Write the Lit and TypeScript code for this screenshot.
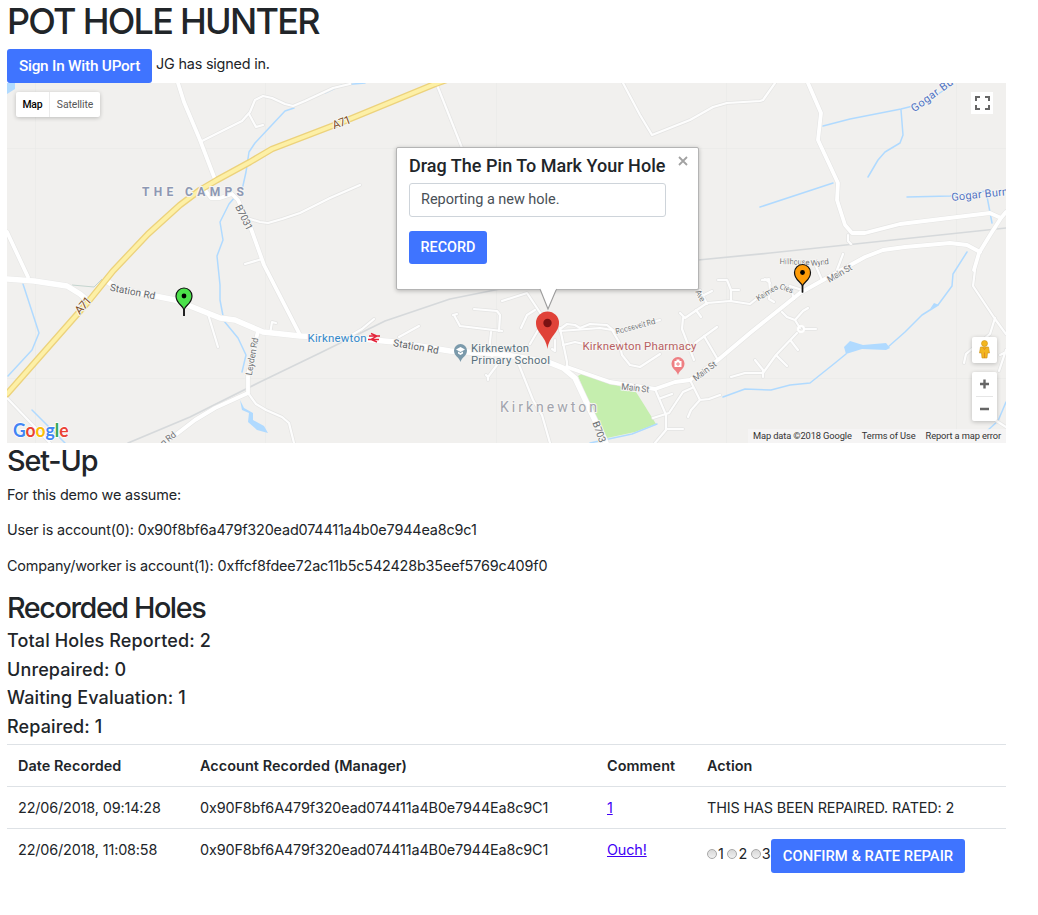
import { LitElement, html, svg, css } from "lit";
import { customElement, property } from "lit/decorators.js";

type Label = { t: string; x: number; y: number; r?: number; s: number; w: number; c: string; b?: number };

const minorRoads = [
  "M202 141L242 121L250 112L255 100L263 96L272 98L285 104L293 106L305 101L333 88L350 84",
  "M249 114L256 127L263 125",
  "M250 219L260 222L268 223L282 219L300 213L330 198L360 185",
  "M245 264L262 259",
  "M208 314L218 347",
  "M294 443L289 423L282 417L266 410L256 404L248 393",
  "M7 398L50 443",
  "M270 334L272 322L276 323",
  "M350 336L362 329L374 319",
  "M399 337L419 326",
  "M453 315L457 314M454 315L460 326L502 331",
  "M474 309L497 311L500 315L499 331",
  "M491 332L489 352L497 365L488 377L486 375M488 376L488 380",
  "M502 301L527 293L545 320",
  "M521 328L527 315L535 310M530 344L541 325",
  "M560 328L567 362L567 368",
  "M560 331L600 328L612 330L619 342L622 355L630 365L640 367L660 354",
  "M560 329L567 324L575 325L580 328L590 324L607 325L614 331",
  "M563 345L575 342L588 345L600 347",
  "M645 324L660 320",
  "M552 349L555 351L555 340",
  "M519 365L533 400L542 415L550 443",
  "M462 148L437 85",
  "M623 83L640 115L652 135L690 120L713 107L727 103L760 101L763 100L775 83",
  "M680 313L685 318L707 303L730 301L750 304L760 296M683 318L682 329L694 360M696 310L701 317M707 304L700 290M704 295L712 291",
  "M718 280L727 280L731 290L731 301M731 290L739 290",
  "M695 343L717 327M704 336L718 360",
  "M655 389L666 415L666 430L655 443M666 429L683 429M661 398L672 394M653 418L669 413L683 392L692 388M691 382L700 400L709 399L720 395M700 400L691 410L688 417",
  "M755 360L763 370L763 377M731 377L745 373L763 373L776 355L797 333M776 355L787 366M791 341L798 350M782 312L787 317L795 320L800 328M795 320L803 311L808 308M804 329L816 329",
  "M762 280L769 279L770 290L769 299L774 302M770 283L765 279M790 286L794 299M802 290L790 286M815 264L822 280M843 254L837 270M848 235L848 241L851 244",
  "M975 270L973 286L995 319L1006 334M995 318L990 334L966 354L964 363M1006 350L999 371M1000 355L1006 352",
  "M995 420L1006 427",
];
const whiteRoads = [
  "M178 83L184 102L200 140L216 182",
  "M205 190L211 198L220 198L232 194L238 200L250 226L264 265L300 335",
  "M7 232L28 277",
  "M258 331L248 374L248 393L215 408L195 420L165 443",
  "M808 83L821 113L818 140L838 183L837 200L845 225L852 233L865 233L900 224L990 213L1001 218L1006 212M1001 218L990 235L979 253L974 270",
  "M567 367L610 382L655 389L675 382L690 380L718 360L750 333L800 293L825 279L865 257L883 250L905 247L950 243L967 245L980 252",
];
const mainRoads = [
  "M7 279L34 281L67 286L80 294L88 301",
  "M107 281L118 289L160 297L175 300L220 318L235 320L263 332L300 336L350 338L395 342L450 351L500 354L548 362L563 368L575 378L590 410L606 443",
];
const streams = [
  "M365 83L342 85L325 93M294 108L285 111L255 143L249 152L246 172L242 190M235 197L229 204L220 222L223 240L217 256L220 285L220 300L224 321L238 338L246 355L242 372",
  "M23 284L39 333L32 350L8 376M32 410L65 443",
  "M823 126L850 119L901 109L925 103L950 86M901 110L903 135L900 143L885 152L878 160L868 177M760 207L833 183M907 197L950 196L986 191L992 223",
  "M967 252L953 274L952 286L938 305L922 315L905 332L888 347M846 354L835 363L810 383L790 385L771 390L745 389L723 397",
  "M590 443L632 434L657 424M1006 402L998 421L988 430",
];
const rail = "M128 443L190 417L260 382L320 353L385 321L450 299L500 289L600 270L698 260L770 253L1006 228";
const a71 = "M460 75L435 84L345 121L272 149L250 162L217 180L200 190L180 205L148 234L113 271L88 302L7 394";

const labels: Label[] = [
  { t: "THE CAMPS", x: 193, y: 196, s: 12, w: 102, c: "#8d98b3", b: 700 },
  { t: "B7031", x: 241, y: 219, r: 64, s: 10, w: 27, c: "#686c71" },
  { t: "A71", x: 343, y: 126, r: -20, s: 11.5, w: 19, c: "#7d4f26" },
  { t: "A71", x: 86, y: 308, r: -48, s: 11.5, w: 19, c: "#7d4f26" },
  { t: "Station Rd", x: 132, y: 295, r: 11, s: 10, w: 46, c: "#5d6368" },
  { t: "Station Rd", x: 415.5, y: 350, r: 10, s: 10, w: 46, c: "#5d6368" },
  { t: "Leyden Rd", x: 255, y: 357, r: -80, s: 9, w: 38, c: "#707377" },
  { t: "n Rd", x: 170, y: 441, r: -38, s: 9, w: 17, c: "#707377" },
  { t: "Kirknewton", x: 337, y: 341.5, s: 11.5, w: 59, c: "#3289cc" },
  { t: "Kirknewton", x: 500, y: 352, s: 11.3, w: 58, c: "#56707d" },
  { t: "Primary School", x: 510.5, y: 364, s: 11.3, w: 79, c: "#56707d" },
  { t: "Kirknewton Pharmacy", x: 639.5, y: 350, s: 11.5, w: 114, c: "#b85f62" },
  { t: "Kirknewton", x: 548.5, y: 412, s: 14, w: 97, c: "#a2a4ad" },
  { t: "Roosevelt Rd", x: 636, y: 329, r: -15, s: 8, w: 41, c: "#74777a" },
  { t: "Main St", x: 635, y: 391, r: 6, s: 9, w: 28, c: "#707377" },
  { t: "Main St", x: 706.5, y: 373.5, r: -37, s: 9, w: 27, c: "#707377" },
  { t: "Main St", x: 841, y: 276, r: -30, s: 9, w: 27, c: "#707377" },
  { t: "B703", x: 596, y: 433, r: 70, s: 10, w: 22, c: "#686c71" },
  { t: "Kaimes", x: 768.5, y: 295, r: -32, s: 8, w: 24, c: "#74777a" },
  { t: "Cres", x: 785.5, y: 291, r: 22, s: 8, w: 14, c: "#74777a" },
  { t: "Hillhouse", x: 794.5, y: 264.5, r: 2, s: 8, w: 30, c: "#74777a" },
  { t: "Wynd", x: 820, y: 265, r: -6, s: 8, w: 18, c: "#74777a" },
  { t: "Ave", x: 698, y: 297, r: 62, s: 8, w: 12, c: "#74777a" },
  { t: "Gogar Bu", x: 934, y: 98, r: -36, s: 11, w: 49, c: "#4f73c4" },
  { t: "Gogar Burn", x: 980, y: 198, r: -6, s: 11, w: 57, c: "#4f73c4" },
];

@customElement("hole-map")
class HoleMap extends LitElement {
  static styles = css`
    :host { display: grid; height: 360px; overflow: hidden; position: relative; font-family: Roboto, sans-serif; background: #f1f0ee; }
    .canvas { display: block; width: 999px; height: 360px; }
    .ctl { position: absolute; background: #fff; border-radius: 2px; box-shadow: 0 1px 4px rgba(0,0,0,.22); }
    .types { left: 9px; top: 9px; width: 84px; height: 25px; display: flex; font-size: 10.4px; line-height: 25px; color: #565656; }
    .types span { text-align: center; white-space: nowrap; }
    .types .on { width: 33px; color: #000; font-weight: 500; border-right: 1px solid #ebebeb; letter-spacing: -0.1px; }
    .types .off { width: 50px; letter-spacing: -0.1px; }
    .full { left: 964px; top: 9px; width: 22px; height: 22px; border-radius: 0; box-shadow: none; }
    .man { left: 965px; top: 254px; width: 25px; height: 26px; }
    .zoom { left: 965px; top: 289px; width: 25px; height: 49px; }
    .ctl svg { display: block; }
    .legal { position: absolute; right: 0; bottom: 0; height: 14px; width: 258px; padding: 0 5px; box-sizing: border-box; display: flex; justify-content: space-between; background: rgba(245,245,245,.75); font-size: 9.3px; letter-spacing: -0.12px; line-height: 14px; color: #333; white-space: nowrap; }
    .info { position: absolute; left: 389px; top: 64px; width: 303px; height: 143px; box-sizing: border-box; background: #fff; border: 1px solid #b4b4b4; border-radius: 2px; box-shadow: 0 1px 4px rgba(0,0,0,.25); padding: 7px 12px; }
    .title { margin: 0; font-weight: 500; font-size: 18px; line-height: 22px; color: #212529; white-space: nowrap; letter-spacing: 0.02px; }
    .field { margin-top: 6px; width: 257px; height: 34px; box-sizing: border-box; border: 1px solid #ced4da; border-radius: 3px; padding: 0 11px; font-size: 14.5px; line-height: 31px; color: #495057; letter-spacing: -0.04px; }
    .rec { margin-top: 14px; width: 78px; height: 33px; border: 0; padding: 0; border-radius: 3px; background: #3f74ff; color: #fff; font: 500 14.4px Roboto, sans-serif; display: block; }
    .x { position: absolute; left: 281px; top: 8px; }
    .over { position: absolute; left: 0; top: 0; pointer-events: none; }
  `;
  private label(l: Label) {
    return svg`<text x=${l.x} y=${l.y} transform="rotate(${l.r ?? 0} ${l.x} ${l.y})" text-anchor="middle" font-size=${l.s}
      font-weight=${l.b ?? 400} textLength=${l.w} fill=${l.c} stroke="#f6f5f3" stroke-width="2" stroke-linejoin="round" paint-order="stroke">${l.t}</text>`;
  }
  private pin(x: number, y: number, c: string) {
    return svg`<g transform="translate(${x} ${y})"><path d="M0 0V-6C-1-11-8-12-8-20A8 8 0 0 1 8-20C8-12 1-11 0-6" fill=${c} stroke="#111" stroke-width="1.2"/>
      <path d="M0 0V-7" stroke="#111" stroke-width="1.6"/><circle cy="-20" r="2.4" fill="#000"/></g>`;
  }
  render() {
    const line = (d: string, c: string, w: number) => svg`<path d=${d} stroke=${c} stroke-width=${w}/>`;
    return html`
      <svg class="canvas" viewBox="7 83 999 360">
        <g stroke="#eae9e7" stroke-width=".6"><path d="M35.500 83V443M265.500 83V443M496.500 83V443M726.500 83V443M956.500 83V443M7 148.500H1006M7 378.500H1006"/></g>
        <path d="M7 83H15V89L7 94Z" fill="#b0daff"/>
        <path d="M578 376L583 373L636 392L643 403L656 424L635 432L607 438L590 405Z" fill="#c5eeae"/>
        <path d="M240 400L242 410L249 413L248 422L257 430L268 433L264 426L253 420L253 413L244 408ZM844 347L850 341L863 345L886 343L890 348L886 350L862 349L846 354ZM930 309L934 303L939 305Z" fill="#b0daff"/>
        <path d="M72 285L94 287L102 279" fill="none" stroke="#c5d5cf" stroke-width="1"/>
        <g fill="none" stroke-linejoin="round" stroke-linecap="round">
          ${streams.map((d) => line(d, "#b0daff", 1.5))}
          ${line(rail, "#d6d9db", 1.7)}
          ${minorRoads.map((d) => line(d, "#e4e4e3", 3.6))}
          ${whiteRoads.map((d) => line(d, "#e5e5e4", 5))}
          ${mainRoads.map((d) => line(d, "#e8e8e7", 6.6))}
          ${minorRoads.map((d) => line(d, "#fdfdfd", 2.2))}
          ${whiteRoads.map((d) => line(d, "#fff", 3.8))}
          ${mainRoads.map((d) => line(d, "#fff", 5.4))}
          ${line(a71, "#ecd27c", 6.6)}${line(a71, "#fdf0a6", 4)}
          <circle cx="801" cy="329" r="3" stroke="#fff" stroke-width="2"/>
        </g>
        ${labels.map((l) => this.label(l))}
        <path d="M369 336H380M368 339.500H379M371 333.500L377 336L371 339.500L377 342" fill="none" stroke="#e4243b" stroke-width="1.400"/>
        <path d="M460.500 362C459 357 454 356 454 350.500A6.500 6.500 0 0 1 467 350.500C467 356 462 357 460.500 362Z" fill="#7b9aab"/>
        <path d="M456 349.500L460.500 347L465 349.500L460.500 352ZM458 351.500V353.500L460.500 355L463 353.500V351.500L460.500 353Z" fill="#fff"/>
        <path d="M678 375C676.500 370 671.500 369 671.500 363.500A6.500 6.500 0 0 1 684.500 363.500C684.500 369 679.500 370 678 375Z" fill="#ee7f83"/>
        <path d="M674.500 361H681.500V367H674.500ZM676.500 361V359.500H679.500V361" fill="#fff"/><path d="M678 362V366M676 364H680" stroke="#ee7f83"/>
        <text x="13" y="436.500" font-family="Lato, sans-serif" font-size="19" font-weight="700" textLength="55.500" lengthAdjust="spacingAndGlyphs" stroke="#fff" stroke-width="1.500" paint-order="stroke"><tspan fill="#4285f4">G</tspan><tspan fill="#ea4335">o</tspan><tspan fill="#fbbc05">o</tspan><tspan fill="#4285f4">g</tspan><tspan fill="#34a853">l</tspan><tspan fill="#ea4335">e</tspan></text>
        ${this.pin(184, 316, "#4be04a")}${this.pin(802.5, 292.5, "#ff9c08")}
      </svg>
      <div class="ctl types"><span class="on">Map</span><span class="off">Satellite</span></div>
      <div class="ctl full"><svg width="22" height="22" fill="none" stroke="#666" stroke-width="2"><path d="M5 9V5H9M14 5H18V9M18 13V17H14M9 17H5V13"/></svg></div>
      <div class="ctl man"><svg width="25" height="26" fill="#f3b61f" stroke="#c9911a" stroke-width=".6"><circle cx="12.500" cy="6.500" r="3"/><path d="M8.500 10H16.500L17.500 16H15.500L15 21H10L9.500 16H7.500Z"/><path d="M12.500 15.500V21M11 10.500L12.500 12.500L14 10.500" stroke="#d9731f"/></svg></div>
      <div class="ctl zoom"><svg width="25" height="49" fill="none" stroke="#666" stroke-width="2.400"><path d="M8 12H17M12.500 7.500V16.500M8 37H17"/><path d="M4 24.500H21" stroke="#e6e6e6" stroke-width="1"/></svg></div>
      <div class="legal"><span>Map data ©2018 Google</span><span>Terms of Use</span><span>Report a map error</span></div>
      <div class="info">
        <h5 class="title">Drag The Pin To Mark Your Hole</h5>
        <div class="field">Reporting a new hole.</div>
        <button class="rec">RECORD</button>
        <svg class="x" width="10" height="10" stroke="#a2a2a2" stroke-width="1.800"><path d="M1 1L9 9M9 1L1 9"/></svg>
      </div>
      <svg class="over" width="999" height="360" viewBox="7 83 999 360">
        <path d="M540 289L548 309L556.500 289" fill="#fff" stroke="#9c9c9c" stroke-width="1.100"/><path d="M540.800 287H555.700V289.800H540.800Z" fill="#fff"/>
        <path d="M547.500 349C546 336 536 333 536 323A11.500 11.500 0 0 1 559 323C559 333 549 336 547.500 349Z" fill="#e04238"/>
        <circle cx="547.500" cy="323" r="4.200" fill="#7b1213"/>
      </svg>`;
  }
}

@customElement("app-root")
class AppRoot extends LitElement {
  @property({ attribute: false }) rows = [
    { date: "22/06/2018, 09:14:28", comment: "1", repaired: true },
    { date: "22/06/2018, 11:08:58", comment: "Ouch!", repaired: false },
  ];
  static styles = css`
    :host { display: block; width: 999px; height: 915px; margin-left: 7px; overflow: hidden; background: #fff; color: #212529; font: 14.4px/22px Inter, sans-serif; }
    h1, h2, h5, p { margin: 0; white-space: nowrap; }
    h1 { font-size: 36px; font-weight: 500; line-height: 43px; height: 49px; letter-spacing: -1.75px; }
    .sign { display: flex; height: 34px; gap: 4px; line-height: 30px; }
    .btn { font: 500 14.8px Roboto, sans-serif; border: 0; padding: 0; border-radius: 3px; background: #3f74ff; color: #fff; height: 34px; white-space: nowrap; }
    .in { width: 145px; font-size: 15.3px; letter-spacing: -0.2px; }
    .user { letter-spacing: -0.19px; }
    h2 { font-size: 28.8px; font-weight: 500; line-height: 36px; height: 41px; letter-spacing: -1.15px; }
    .p { height: 35.300px; letter-spacing: -0.16px; }
    .rec { margin-top: 0.1px; height: 40.500px; letter-spacing: -1.45px; }
    h5 { font-size: 18px; font-weight: 500; line-height: 22px; height: 28.400px; letter-spacing: 0.12px; }
    .table { display: grid; grid-template-columns: 182px 407px 100px 310px; }
    .c { height: 42px; box-sizing: border-box; border-top: 1px solid #dee2e6; padding: 10px 11px; white-space: nowrap; letter-spacing: -0.14px; }
    .h { font-weight: 600; letter-spacing: 0.07px; }
    .link { color: #3f00f5; text-decoration: underline; }
    .rate { display: flex; }
    .opts { display: flex; align-items: center; height: 30px; width: 64px; }
    .dot { width: 10px; height: 10px; box-sizing: border-box; border: 1px solid #a8a8a8; border-radius: 50%; background: linear-gradient(#d8d8d8, #f0f0f0); margin-right: 1px; flex: none; }
    .num { margin-right: 3.700px; }
    .confirm { width: 194px; letter-spacing: 0; }
  `;
  render() {
    return html`
      <h1>POT HOLE HUNTER</h1>
      <div class="sign"><button class="btn in">Sign In With UPort</button><span class="user">JG has signed in.</span></div>
      <hole-map></hole-map>
      <h2>Set-Up</h2>
      <p class="p">For this demo we assume:</p>
      <p class="p">User is account(0): 0x90f8bf6a479f320ead074411a4b0e7944ea8c9c1</p>
      <p class="p">Company/worker is account(1): 0xffcf8fdee72ac11b5c542428b35eef5769c409f0</p>
      <h2 class="rec">Recorded Holes</h2>
      <h5>Total Holes Reported: 2</h5><h5>Unrepaired: 0</h5><h5>Waiting Evaluation: 1</h5><h5>Repaired: 1</h5>
      <div class="table">
        ${["Date Recorded", "Account Recorded (Manager)", "Comment", "Action"].map((t) => html`<div class="c h">${t}</div>`)}
        ${this.rows.map((r) => html`
          <div class="c">${r.date}</div>
          <div class="c">0x90F8bf6A479f320ead074411a4B0e7944Ea8c9C1</div>
          <div class="c"><span class="link">${r.comment}</span></div>
          ${r.repaired
            ? html`<div class="c">THIS HAS BEEN REPAIRED. RATED: 2</div>`
            : html`<div class="c rate"><div class="opts">${[1, 2, 3].map((n) => html`<span class="dot"></span><span class="num">${n}</span>`)}</div><button class="btn confirm">CONFIRM &amp; RATE REPAIR</button></div>`}`)}
      </div>`;
  }
}
